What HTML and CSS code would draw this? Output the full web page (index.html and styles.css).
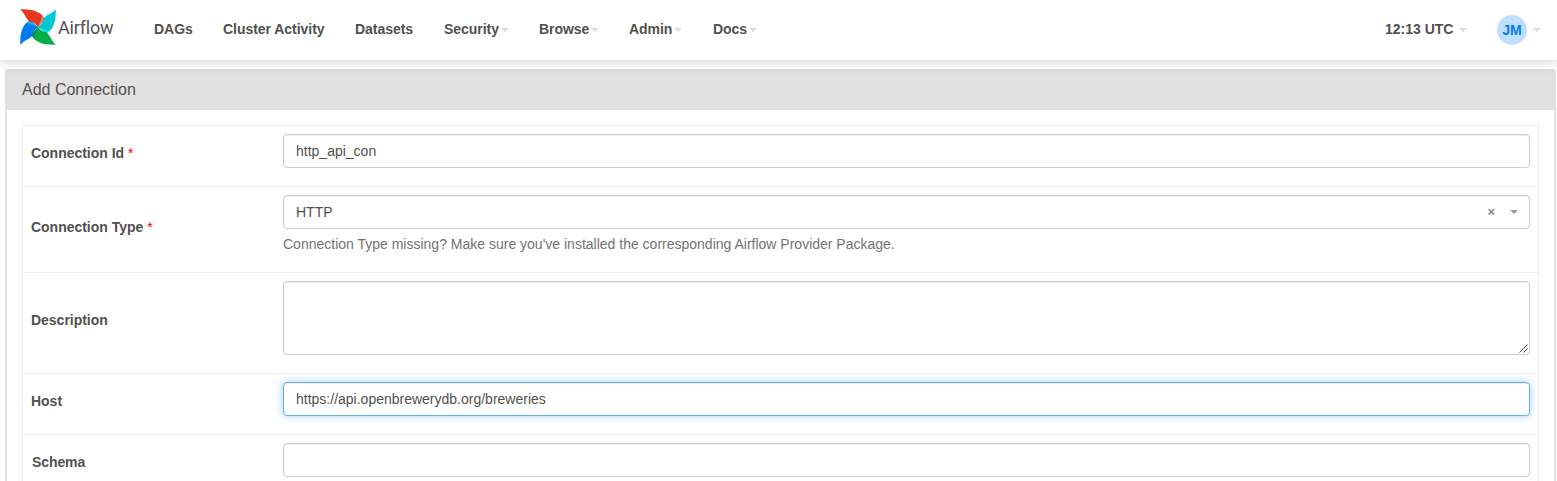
FILE: index.html
```html
<!DOCTYPE html>
<html lang="en">
<head>
<meta charset="utf-8">
<title>Add Connection - Airflow</title>
<link rel="stylesheet" href="styles.css">
</head>
<body>
<nav class="navbar">
  <a class="brand">
    <svg class="pinwheel" viewBox="0 0 36 36" width="36" height="36">
      <defs>
        <path id="blade" d="M.2.2C8 .2 16 .5 22 6.2C21.8 10 19.8 13 18 18C15 14.5 12.5 12 10.5 13.5C6 10.5 5 4.5 .2.2Z"/>
        <path id="fold" d="M20 4.6C22.5 6.5 24.4 8.8 25.3 11.2C22.5 13 20 15.5 18 18.5L17 12Z"/>
      </defs>
      <use href="#fold" fill="#ff7557"/>
      <use href="#fold" fill="#11e1ee" transform="rotate(90 18 18)"/>
      <use href="#fold" fill="#008c3a" transform="rotate(180 18 18)"/>
      <use href="#fold" fill="#0cb6ff" transform="rotate(270 18 18)"/>
      <use href="#blade" fill="#e43921"/>
      <use href="#blade" fill="#00c7d4" transform="rotate(90 18 18)"/>
      <use href="#blade" fill="#00ad46" transform="rotate(180 18 18)"/>
      <use href="#blade" fill="#017cee" transform="rotate(270 18 18)"/>
    </svg>
    <span class="brand-name">Airflow</span>
  </a>
  <ul class="menu">
    <li class="w-dags">DAGs</li>
    <li class="w-cluster">Cluster Activity</li>
    <li class="w-datasets">Datasets</li>
    <li class="w-security">Security<b class="caret"></b></li>
    <li class="w-browse">Browse<b class="caret"></b></li>
    <li class="w-admin">Admin<b class="caret"></b></li>
    <li>Docs<b class="caret"></b></li>
  </ul>
  <div class="clock">12:13 UTC<b class="caret"></b></div>
  <div class="user"><span class="avatar">JM</span><b class="caret"></b></div>
</nav>
<main class="panel">
  <h1 class="panel-title">Add Connection</h1>
  <form class="fields">
    <div class="row">
      <label class="label">Connection Id <i>*</i></label>
      <div class="cell"><div class="control">http_api_con</div></div>
    </div>
    <div class="row row-type">
      <label class="label">Connection Type <i>*</i></label>
      <div class="cell">
        <div class="control select">HTTP<span class="clear">×</span><b class="caret"></b></div>
        <p class="help">Connection Type missing? Make sure you've installed the corresponding Airflow Provider Package.</p>
      </div>
    </div>
    <div class="row row-description">
      <label class="label">Description</label>
      <div class="cell"><div class="control area">
        <svg class="grip" width="9" height="9" viewBox="0 0 9 9"><path d="M.5 8.5L8.5 .5M4.5 8.5L8.5 4.5" stroke="#444" fill="none"/></svg>
      </div></div>
    </div>
    <div class="row">
      <label class="label">Host</label>
      <div class="cell"><div class="control focused">https://api.openbrewerydb.org/breweries</div></div>
    </div>
    <div class="row row-last">
      <label class="label label-schema">Schema</label>
      <div class="cell"><div class="control"></div></div>
    </div>
  </form>
</main>
</body>
</html>
```
FILE: styles.css
```css
* { box-sizing: border-box; }
html { height: 100%; overflow: hidden; }
body {
  display: flex;
  flex-direction: column;
  margin: 0;
  height: 100%;
  overflow: hidden;
  background: #fff;
  color: #51504f;
  font: 14px/20px "Liberation Sans", Arial, sans-serif;
}
.navbar {
  position: relative;
  display: flex;
  flex: none;
  align-items: center;
  height: 60px;
  padding-left: 20px;
  background: #fff;
  box-shadow: 0 1px 10px 2px rgba(0, 0, 0, .14);
  font-weight: bold;
}
.brand { display: flex; width: 134px; height: 42px; }
.brand-name {
  margin-left: 2px;
  font: 18px/37px Roboto, sans-serif;
  letter-spacing: -.2px;
}
.menu { display: flex; margin: 0; padding: 0 0 2px; list-style: none; }
.menu li, .clock, .user { display: flex; align-items: center; white-space: nowrap; }
.menu li { letter-spacing: -.04px; }
.w-dags { width: 69px; }
.w-cluster { width: 132px; }
.w-datasets { width: 89px; }
.w-security { width: 95px; }
.w-browse { width: 90px; }
.w-admin { width: 84px; }
.caret {
  margin: 2px 0 0 2px;
  border: 4px solid transparent;
  border-top-color: #e6d5e4;
  border-bottom: 0;
}
.clock { width: 112px; margin-left: auto; padding-bottom: 2px; }
.clock .caret { margin-left: 6px; }
.user { width: 60px; }
.user .caret { margin-left: 6px; margin-top: 0; }
.avatar {
  width: 30px;
  height: 30px;
  border-radius: 50%;
  background: #bfdefb;
  color: #017cee;
  line-height: 31px;
  text-align: center;
}
.panel {
  flex: 1;
  min-height: 0;
  margin: 9px 1px 0 5px;
  border: solid #e1e1e1;
  border-width: 0 2px;
  border-radius: 4px 4px 0 0;
}
.panel-title {
  height: 41px;
  margin: 0 -2px;
  padding-left: 17px;
  border-radius: 4px 4px 0 0;
  background: linear-gradient(#dcdcdc, #e1e1e1 5px);
  font-size: 16px;
  font-weight: normal;
  line-height: 41px;
}
.fields { margin: 15px 15px 0; border: solid #eee; border-width: 0 1px; }
.row { display: flex; height: 61px; border-top: 1px solid #eee; }
.row-type { height: 86px; }
.row-description { height: 101px; }
.row-last { height: 47px; }
.row-last .label { height: 60px; }
.label {
  display: flex;
  align-items: center;
  gap: 4px;
  width: 260px;
  padding: 0 0 6px 8px;
  font-weight: bold;
  letter-spacing: -.02px;
}
.label.label-schema { padding-left: 9px; letter-spacing: -.1px; }
.label i { color: #f00; font-style: normal; font-weight: normal; }
.cell { flex: 1; padding: 8px 8px 0 0; }
.control {
  display: flex;
  height: 34px;
  padding: 0 12px;
  border: 1px solid #ccc;
  border-radius: 4px;
  background: #fff;
  box-shadow: inset 0 1px 1px rgba(0, 0, 0, .075);
  line-height: 32px;
}
.focused {
  border-color: #66afe9;
  box-shadow: inset 0 1px 1px rgba(0, 0, 0, .075), 0 0 8px rgba(102, 175, 233, .6);
}
.select { align-items: center; padding-right: 11px; }
.select .caret { margin: 0 0 0 15px; border-top-color: #999; }
.clear { margin-left: auto; color: #888; font-size: 13px; font-weight: bold; }
.area { height: 74px; justify-content: flex-end; align-items: flex-end; padding: 0 1px 1px; }
.help { margin: 5px 0 0; color: #737373; }
```
